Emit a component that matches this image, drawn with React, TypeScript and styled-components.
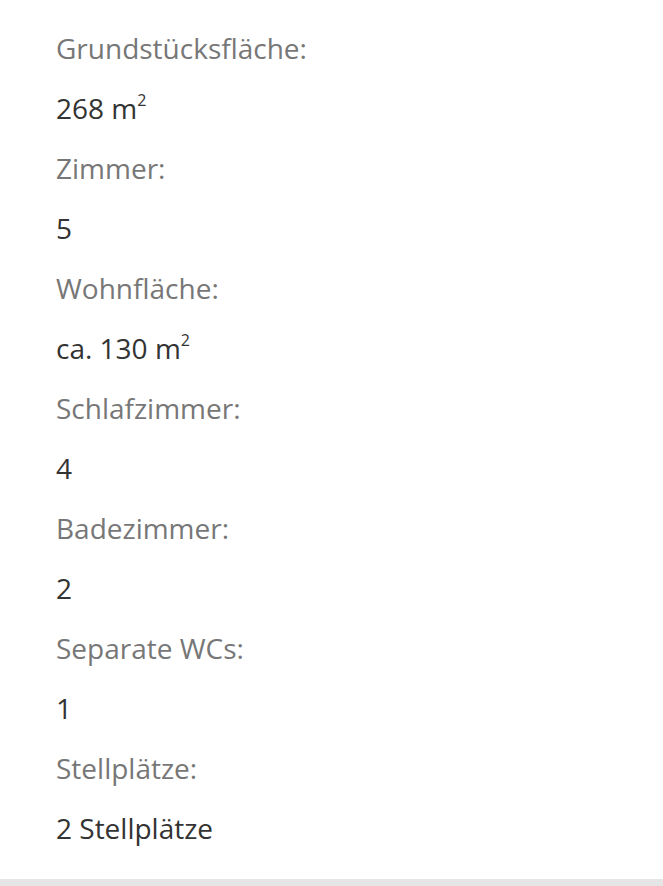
import React from "react";
import { createGlobalStyle, styled } from "styled-components";

const GlobalStyle = createGlobalStyle`
	html, body {
		margin: 0;
		padding: 0;
		background: #ffffff;
	}
	body {
		font-family: "Open Sans", "Noto Sans", sans-serif;
	}
`;

const Page = styled.div`
	display: flex;
	flex-direction: column;
	min-height: 886px;
`;

const List = styled.dl`
	margin: 0;
	padding: 18px 56px 21px;
	display: flex;
	flex-direction: column;
`;

const Label = styled.dt`
	font-size: 28px;
	line-height: 60px;
	color: #777777;
`;

const Value = styled.dd`
	margin: 0;
	font-size: 28px;
	line-height: 60px;
	color: #333333;
	sup {
		font-size: 16px;
		line-height: 0;
		vertical-align: 13px;
	}
`;

const Footer = styled.div`
	flex: 1;
	background: #e5e5e5;
`;

const rows: { label: string; value: React.ReactNode }[] = [
	{ label: "Grundstücksfläche:", value: <>268 m<sup>2</sup></> },
	{ label: "Zimmer:", value: "5" },
	{ label: "Wohnfläche:", value: <>ca. 130 m<sup>2</sup></> },
	{ label: "Schlafzimmer:", value: "4" },
	{ label: "Badezimmer:", value: "2" },
	{ label: "Separate WCs:", value: "1" },
	{ label: "Stellplätze:", value: "2 Stellplätze" },
];

export default function App() {
	return (
		<>
			<GlobalStyle />
			<Page>
				<List>
					{rows.map((r) => (
						<React.Fragment key={r.label}>
							<Label>{r.label}</Label>
							<Value>{r.value}</Value>
						</React.Fragment>
					))}
				</List>
				<Footer />
			</Page>
		</>
	);
}
